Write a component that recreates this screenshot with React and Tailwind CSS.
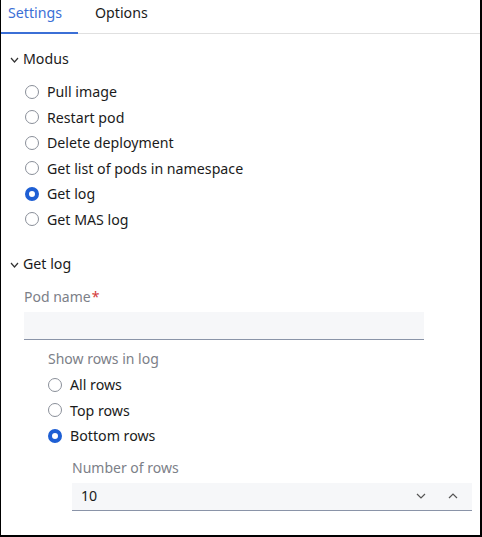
import React from "react";

const font = { fontFamily: '"Noto Sans", "Open Sans", sans-serif' };

function Chevron({ up = false, className = "", w = 10, h = 6 }) {
  return (
    <svg width={w} height={h} viewBox={`0 0 ${w} ${h}`} className={className}>
      <path
        d={up ? `M1 ${h - 1} L${w / 2} 1 L${w - 1} ${h - 1}` : `M1 1 L${w / 2} ${h - 1} L${w - 1} 1`}
        fill="none"
        stroke="currentColor"
        strokeWidth="1.2"
      />
    </svg>
  );
}

function Radio({ checked, label }) {
  return (
    <div className="flex items-center h-[25.5px]">
      {checked ? (
        <span className="w-[14px] h-[14px] rounded-full border-[4px] border-[#1e5fd4] bg-white box-border" />
      ) : (
        <span className="w-[14px] h-[14px] rounded-full border border-[#8a8f99] bg-white box-border" />
      )}
      <span className="ml-[8px] text-[14.2px] text-[#1b1b1b]">{label}</span>
    </div>
  );
}

function SectionHeader({ label }) {
  return (
    <div className="flex items-center h-[22px]">
      <Chevron w={9} h={6} className="text-[#333] mt-[2px]" />
      <span className="ml-[4px] text-[14.2px] text-[#1b1b1b]">{label}</span>
    </div>
  );
}

export default function App() {
  return (
    <div
      className="w-[482px] h-[537px] bg-white border-l border-r-2 border-b-2 border-black box-border overflow-hidden"
      style={font}
    >
      <div className="flex items-start h-[34px] border-b border-[#e0e0e0]">
        <div className="w-[77px] h-[34px] border-b-2 border-[#3b6fd6] flex items-start pl-[7px] pt-[2px]">
          <span className="text-[14.2px] text-[#3b6fd6]">Settings</span>
        </div>
        <div className="flex items-start pl-[17px] pt-[2px]">
          <span className="text-[14.2px] text-[#1b1b1b]">Options</span>
        </div>
      </div>

      <div className="pl-[9px] pt-[14px]">
        <SectionHeader label="Modus" />
        <div className="pl-[15px] pt-[9px]">
          <Radio label="Pull image" />
          <Radio label="Restart pod" />
          <Radio label="Delete deployment" />
          <Radio label="Get list of pods in namespace" />
          <Radio checked label="Get log" />
          <Radio label="Get MAS log" />
        </div>

        <div className="pt-[21px]">
          <SectionHeader label="Get log" />
        </div>

        <div className="pl-[14px] pt-[12px]">
          <div className="text-[14px] text-[#7c8088] h-[20px] leading-[20px]">
            Pod name<span className="text-[#d33a3a] ml-[1px]">*</span>
          </div>
          <div className="mt-[5px] w-[400px] h-[28px] bg-[#f6f7f9] border-b border-[#8a94a8]" />

          <div className="pl-[24px] pt-[9px]">
            <div className="text-[14px] text-[#7c8088] h-[20px] leading-[20px]">
              Show rows in log
            </div>
            <div className="pt-[3px]">
              <Radio label="All rows" />
              <Radio label="Top rows" />
              <Radio checked label="Bottom rows" />
            </div>

            <div className="pl-[24px] pt-[9px]">
              <div className="text-[14px] text-[#7c8088] h-[20px] leading-[20px]">
                Number of rows
              </div>
              <div className="mt-[5px] w-[400px] h-[28px] bg-[#f6f7f9] border-b border-[#8a94a8] flex items-center pl-[9px] pr-[14px]">
                <span className="text-[14.2px] text-[#1b1b1b] flex-1">10</span>
                <Chevron className="text-[#555]" />
                <Chevron up className="text-[#555] ml-[22px]" />
              </div>
            </div>
          </div>
        </div>
      </div>
    </div>
  );
}
